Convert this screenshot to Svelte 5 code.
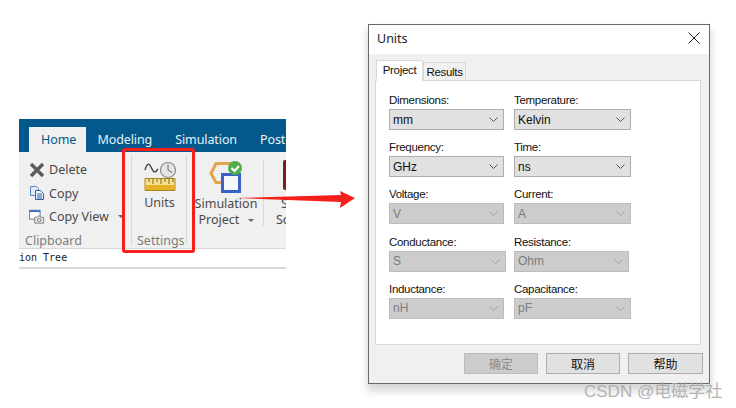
<script>
  const rows = [
    [{ label: 'Dimensions:', value: 'mm' }, { label: 'Temperature:', value: 'Kelvin' }],
    [{ label: 'Frequency:', value: 'GHz' }, { label: 'Time:', value: 'ns' }],
    [{ label: 'Voltage:', value: 'V', off: true }, { label: 'Current:', value: 'A', off: true }],
    [{ label: 'Conductance:', value: 'S', off: true, cls: 'wide' }, { label: 'Resistance:', value: 'Ohm', off: true, cls: 'narrow' }],
    [{ label: 'Inductance:', value: 'nH', off: true }, { label: 'Capacitance:', value: 'pF', off: true }]
  ];
</script>

<div class="page">
  <div class="ribbon">
    <div class="tabs">
      <span class="tab active">Home</span>
      <span class="tab">Modeling</span>
      <span class="tab">Simulation</span>
      <span class="tab">Post-</span>
    </div>
    <div class="tools">
      <div class="group clipboard">
        <div class="cmd">
          <svg width="16" height="16" viewBox="0 0 16 16"><path d="M2 2l12 12M14 2L2 14" stroke="#5c5c5c" stroke-width="3.4" /></svg>
          <span>Delete</span>
        </div>
        <div class="cmd">
          <svg width="16" height="16" viewBox="0 0 16 16">
            <path d="M1.500 1.500h6l2 2v7h-8z" fill="#dfe9f7" stroke="#5c84bd" />
            <path d="M6.500 5.500h5l3 3v6h-8z" fill="#eef4fc" stroke="#2f5fa8" />
            <path d="M8 9h5M8 11h5M8 13h5" stroke="#2f5fa8" />
          </svg>
          <span>Copy</span>
        </div>
        <div class="cmd">
          <svg width="16" height="17" viewBox="0 0 18 17">
            <path d="M.5 1.500h12v10H.5z" fill="#fff" stroke="#3f6fb5" />
            <path d="M.5 1.500h12v2H.5z" fill="#3f6fb5" />
            <path d="M6.500 9.500h2l1-1.500h3l1 1.500h3v6.500h-10z" fill="#e8e8e8" stroke="#777" />
            <circle cx="11.500" cy="12.500" r="2" fill="none" stroke="#777" />
          </svg>
          <span>Copy View</span>
          <i class="caret"></i>
        </div>
        <div class="group-name">Clipboard</div>
      </div>

      <div class="group settings">
        <div class="big">
          <svg width="32" height="30" viewBox="0 0 32 30">
            <path d="M1 9c2-7 4-7 6-3s3 8 7 2" fill="none" stroke="#444" stroke-width="1.400" />
            <circle cx="24" cy="9" r="7.500" fill="#e4e4e4" stroke="#8a8a8a" stroke-width="1.200" />
            <path d="M24 3.500V9l4 2.500" fill="none" stroke="#666" />
            <path d="M1 17.500h30v12H1z" fill="#f6df8e" stroke="#a58526" />
            <path d="M1.500 24h29v5h-29z" fill="#e5b225" />
            <path d="M5 18v3M9 18v5M13 18v3M17 18v5M21 18v3M25 18v5M29 18v3" stroke="#7d6414" />
          </svg>
          <span class="big-label">Units</span>
        </div>
        <div class="group-name">Settings</div>
      </div>

      <div class="group sim">
        <div class="big">
          <svg width="34" height="34" viewBox="0 0 34 34">
            <path d="M7 3.500h16l3 9-4 10H7l-5-9z" fill="none" stroke="#e3a548" stroke-width="3" />
            <path d="M13.500 14.500h17v17h-17z" fill="#f4f7fc" stroke="#3a62c4" stroke-width="3" />
            <circle cx="26" cy="8" r="7" fill="#4faf4f" />
            <path d="M22.500 8l3 3 4.500-5" fill="none" stroke="#fff" stroke-width="2" />
          </svg>
          <span class="big-label">Simulation</span>
          <span class="big-label">Project <i class="caret"></i></span>
        </div>
      </div>

      <div class="group cut">
        <div class="book"></div>
        <span class="big-label s">S</span>
        <span class="big-label">So</span>
      </div>
    </div>
    <div class="tree"><span>ion Tree</span></div>
  </div>

  <div class="dialog">
    <div class="titlebar">
      <span>Units</span>
      <svg width="12" height="12" viewBox="0 0 12 12"><path d="M.5.5l11 11M11.500.5l-11 11" stroke="#222" fill="none" /></svg>
    </div>
    <div class="body">
      <div class="dtabs">
        <span class="dtab on">Project</span>
        <span class="dtab">Results</span>
      </div>
      <div class="panel">
        {#each rows as row}
          <div class="row">
            {#each row as f}
              <div class="field {f.cls || ''}">
                <label>{f.label}</label>
                <div class="combo" class:off={f.off}>
                  <span>{f.value}</span>
                  <svg width="9" height="5" viewBox="0 0 9 5"><path d="M.5.5l4 4 4-4" fill="none" stroke={f.off ? '#a0a0a0' : '#555'} /></svg>
                </div>
              </div>
            {/each}
          </div>
        {/each}
      </div>
      <div class="buttons">
        <button class="btn off">确定</button>
        <button class="btn">取消</button>
        <button class="btn last">帮助</button>
      </div>
    </div>
  </div>

  <div class="redbox"></div>
  <svg class="arrow" width="125" height="26" viewBox="0 0 125 26">
    <path d="M0 11L105 8 104 4 119 11 104 21 105 15z" fill="#f5201c" />
  </svg>
  <span class="mark">CSDN @电磁学社</span>
</div>

<style>
  :global(body) {
    background: #fff;
  }
  .page {
    position: relative;
    width: 736px;
    height: 408px;
    overflow: hidden;
    background: #fff;
    font-family: "Liberation Sans", sans-serif;
  }

  /* left: ribbon crop */
  .ribbon {
    position: absolute;
    left: 19px;
    top: 119px;
    width: 267px;
    font-family: "Noto Sans", "Open Sans", sans-serif;
    color: #4a4a4a;
  }
  .tabs {
    display: flex;
    align-items: flex-end;
    height: 33px;
    padding-left: 10px;
    background: #04598c;
    overflow: hidden;
  }
  .tab {
    padding: 0 11.5px;
    height: 25px;
    line-height: 26px;
    font-size: 12.5px;
    letter-spacing: -0.1px;
    color: #e8f1f7;
    white-space: nowrap;
  }
  .tab.active {
    width: 57px;
    box-sizing: border-box;
    padding: 0 12px;
    background: #f0f0f0;
    color: #04598c;
  }
  .tools {
    display: flex;
    height: 96px;
    overflow: hidden;
    background: #f0f0f0;
    border-bottom: 1px solid #d8d8d8;
  }
  .group {
    position: relative;
    flex: none;
    box-sizing: border-box;
    font-size: 12.5px;
  }
  .clipboard {
    width: 112px;
    padding: 6px 0 0 10px;
  }
  .cmd {
    display: flex;
    align-items: center;
    gap: 4px;
    height: 23.5px;
    white-space: nowrap;
  }
  .cmd svg {
    flex: none;
  }
  .caret {
    display: inline-block;
    margin-left: 5px;
    border: 3px solid transparent;
    border-top: 3px solid #666;
    border-bottom: 0;
    vertical-align: middle;
  }
  .group-name {
    position: absolute;
    bottom: 0;
    left: 6px;
    font-size: 12.5px;
    line-height: 14px;
    color: #7c7c7c;
  }
  .settings {
    width: 56px;
    height: 90px;
    margin-top: 3px;
    border-left: 1px solid #d8d8d8;
    border-right: 1px solid #d8d8d8;
  }
  .settings .group-name {
    left: 5px;
    bottom: -3px;
  }
  .big {
    display: flex;
    flex-direction: column;
    align-items: center;
    padding-top: 6px;
  }
  .big-label {
    font-size: 12.5px;
    line-height: 16px;
    white-space: nowrap;
  }
  .settings .big svg {
    margin-bottom: 4px;
  }
  .settings .big {
    padding-left: 1px;
  }
  .sim {
    width: 77px;
    height: 66px;
    margin-top: 8px;
    padding-left: 2px;
    border-right: 1px solid #d8d8d8;
  }
  .sim .big {
    padding-top: 0;
  }
  .sim .big svg {
    margin-bottom: 2px;
  }
  .cut {
    display: flex;
    flex-direction: column;
    align-items: flex-start;
    padding: 8px 0 0 12px;
  }
  .book {
    width: 10px;
    height: 30px;
    margin: 0 0 6px 7px;
    border-radius: 2px 0 0 2px;
    background: #7c1c1c;
  }
  .s {
    margin-left: 5px;
  }
  .tree {
    height: 18px;
    border-bottom: 2px solid #d8d8d8;
    background: #fff;
    font: 10px/17px "DejaVu Sans Mono", monospace;
    color: #222;
    white-space: pre;
  }

  /* right: dialog */
  .dialog {
    position: absolute;
    left: 368px;
    top: 24px;
    box-sizing: border-box;
    width: 342px;
    height: 360px;
    border: 1px solid #6a6a6a;
    background: #f0f0f0;
    box-shadow: 0 6px 8px 1px rgba(0, 0, 0, 0.16);
    color: #111;
    font-size: 11.5px;
  }
  .titlebar {
    display: flex;
    align-items: center;
    justify-content: space-between;
    box-sizing: border-box;
    height: 29px;
    padding: 0 9px 3px 8px;
    background: #fff;
    font-family: "Noto Sans", sans-serif;
    font-size: 12.5px;
    color: #222;
  }
  .body {
    padding: 6px 6px 0 6px;
  }
  .dtabs {
    display: flex;
    align-items: flex-end;
    height: 20px;
    padding-left: 1px;
  }
  .dtab {
    box-sizing: border-box;
    width: 43px;
    height: 18px;
    line-height: 19px;
    text-align: center;
    border: 1px solid #d9d9d9;
    border-bottom: 0;
    background: #f0f0f0;
    letter-spacing: -0.3px;
  }
  .dtab.on {
    width: 47px;
    height: 21px;
    line-height: 19px;
    margin-bottom: -1px;
    background: #fff;
    position: relative;
    z-index: 1;
  }
  .panel {
    box-sizing: border-box;
    width: 326px;
    height: 265px;
    padding: 13px 0 0 13px;
    background: #fff;
    border: 1px solid #d9d9d9;
  }
  .row {
    display: flex;
    gap: 10px;
    height: 47.2px;
  }
  .field {
    width: 115px;
  }
  .field.wide {
    width: 117px;
    margin-right: -2px;
  }
  .row .field:nth-child(2) {
    width: 117px;
  }
  .row .field.narrow {
    width: 115px;
  }
  label {
    display: block;
    height: 15px;
    line-height: 13px;
    letter-spacing: -0.3px;
  }
  .combo {
    display: flex;
    align-items: center;
    justify-content: space-between;
    box-sizing: border-box;
    height: 21px;
    padding: 0 5px 0 3px;
    border: 1px solid #adadad;
    background: #e1e1e1;
    font-size: 12px;
  }
  .combo.off {
    border-color: #bcbcbc;
    background: #cccccc;
    color: #7d7d7d;
  }
  .buttons {
    display: flex;
    justify-content: flex-end;
    gap: 8px;
    margin-top: 8px;
  }
  .btn {
    box-sizing: border-box;
    width: 74px;
    height: 21px;
    padding: 0;
    border: 1px solid #adadad;
    background: #e1e1e1;
    color: #111;
    font: 12px "Noto Sans CJK SC", sans-serif;
  }
  .btn.last {
    width: 75px;
  }
  .btn.off {
    border-color: #bcbcbc;
    background: #cccccc;
    color: #8a8a8a;
  }

  /* annotation overlays */
  .redbox {
    position: absolute;
    left: 122px;
    top: 148px;
    box-sizing: border-box;
    width: 73px;
    height: 105px;
    border: 3px solid #f5201c;
    border-radius: 3px;
  }
  .arrow {
    position: absolute;
    left: 236px;
    top: 187px;
  }
  .mark {
    position: absolute;
    left: 584px;
    top: 377px;
    font-family: "Liberation Sans", "Noto Sans CJK SC", sans-serif;
    font-size: 17px;
    color: #a8a8a8;
    opacity: 0.85;
    white-space: nowrap;
  }
</style>
